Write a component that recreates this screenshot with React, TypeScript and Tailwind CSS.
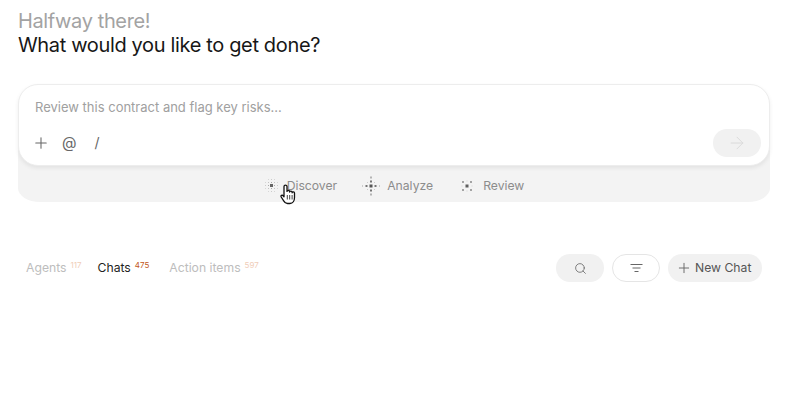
import React from "react";
import { Plus, Search, ArrowRight } from "lucide-react";

type Dot = [number, number, number, number];

function Dots({ dots, size }: { dots: Dot[]; size: number }) {
  return (
    <svg width={size} height={size} viewBox={`0 0 ${size} ${size}`} className="shrink-0">
      {dots.map(([x, y, s, o], i) => (
        <rect key={i} x={x - s / 2} y={y - s / 2} width={s} height={s} fill="#555" opacity={o} />
      ))}
    </svg>
  );
}

const discover: Dot[] = [
  [7.5, 7.5, 3, 0.9],
  [4.5, 7.5, 1, 0.45], [10.5, 7.5, 1, 0.45], [7.5, 4.5, 1, 0.45], [7.5, 10.5, 1, 0.45],
  [4.5, 4.5, 1, 0.3], [10.5, 4.5, 1, 0.3], [4.5, 10.5, 1, 0.3], [10.5, 10.5, 1, 0.3],
  [1.5, 7.5, 1, 0.25], [13.5, 7.5, 1, 0.25], [7.5, 1.5, 1, 0.25], [7.5, 13.5, 1, 0.25],
  [1.5, 4.5, 1, 0.18], [13.5, 4.5, 1, 0.18], [1.5, 10.5, 1, 0.18], [13.5, 10.5, 1, 0.18],
  [4.5, 1.5, 1, 0.18], [10.5, 1.5, 1, 0.18], [4.5, 13.5, 1, 0.18], [10.5, 13.5, 1, 0.18],
];
const analyze: Dot[] = [
  [10, 10, 3, 1],
  [5.5, 10, 2, 0.8], [14.5, 10, 2, 0.8], [10, 5.5, 2, 0.8], [10, 14.5, 2, 0.8],
  [1.5, 10, 1, 0.5], [18.5, 10, 1, 0.5], [10, 1.5, 2, 0.4], [10, 18.5, 2, 0.4],
  [6.5, 6.5, 1, 0.25], [13.5, 6.5, 1, 0.25], [6.5, 13.5, 1, 0.25], [13.5, 13.5, 1, 0.25],
];
const review: Dot[] = [
  [8, 8, 3, 0.95],
  [4, 4, 2, 0.5], [12, 4, 2, 0.5], [4, 12, 2, 0.5], [12, 12, 2, 0.5],
  [8, 3, 1, 0.2], [8, 13, 1, 0.2], [3, 8, 1, 0.2], [13, 8, 1, 0.2],
];

function HandCursor() {
  return (
    <svg width="16" height="21" viewBox="0 0 16 21" className="absolute left-[280px] top-[184px]">
      <path
        d="M4 2.4c0-1.800 3-1.800 3 0v5c0-1.300 2.600-1.300 2.600 0v.7c0-1.300 2.500-1.300 2.500 0v.7c0-1.200 2.400-1.100 2.400.3v4.400c0 3-1.600 6-4.600 6H7.500c-2 0-3-1.100-3.800-2.600L1.200 13c-.7-1.400 1-2.400 2-1.200L4 12.800z"
        fill="#fff"
        stroke="#111"
        strokeWidth="1.300"
        strokeLinejoin="round"
      />
      <path d="M7.300 11v4.500M9.700 11v4.500M12.100 11v4.500" stroke="#111" strokeWidth="0.8" fill="none" />
    </svg>
  );
}

function ModeItem({ dots, size, label, gap }: { dots: Dot[]; size: number; label: string; gap: string }) {
  return (
    <div className={`flex items-center ${gap}`}>
      <Dots dots={dots} size={size} />
      <span className="text-[12.2px] leading-4 text-[#8c8c8c]">{label}</span>
    </div>
  );
}

function Tab({ label, count, active, className }: { label: string; count: number; active?: boolean; className?: string }) {
  return (
    <div className={`flex items-start gap-1 ${className ?? ""}`}>
      <span className={`text-[12.2px] leading-4 ${active ? "text-[#222]" : "text-[#bdbdbd]"}`}>{label}</span>
      <span className={`text-[8px] leading-[10px] ${active ? "text-[#c2571a]" : "text-[#f0cdb8]"}`}>{count}</span>
    </div>
  );
}

export default function App() {
  return (
    <div
      className="relative h-[416px] w-[790px] overflow-hidden bg-white pl-[18px] pr-5 pt-[9px]"
      style={{ fontFamily: "Inter, 'Noto Sans', sans-serif" }}
    >
      <h1 className="text-[20px] font-normal leading-6 tracking-[-0.38px] text-[#a3a3a3]">Halfway there!</h1>
      <h2 className="text-[20px] font-normal leading-6 tracking-[-0.35px] text-[#171717]">What would you like to get done?</h2>

      <div className="relative z-10 mt-[27px] flex h-[82px] flex-col justify-between rounded-[20px] border border-[#ededed] bg-white pb-[8px] pl-4 pr-2 pt-[13px] shadow-[0_2px_4px_rgba(0,0,0,0.07)]">
        <p className="text-[13px] leading-[18px] text-[#a0a0a0]">Review this contract and flag key risks...</p>
        <div className="flex items-center justify-between">
          <div className="flex items-center text-[#666]">
            <Plus size={18} strokeWidth={1.4} className="-ml-[3px]" />
            <span className="ml-[12px] text-[15px] leading-5">@</span>
            <span className="ml-[18px] text-[14px] leading-5">/</span>
          </div>
          <div className="flex h-7 w-12 items-center justify-center rounded-full bg-[#f1f1f1]">
            <ArrowRight size={20} strokeWidth={1.1} className="text-[#d9d9d9]" />
          </div>
        </div>
      </div>

      <div className="-mt-5 flex h-[56px] items-end justify-center rounded-bl-[22px_14px] rounded-br-[22px_14px] bg-[#f3f3f3] pb-[6px]">
        <div className="flex items-center">
          <ModeItem dots={discover} size={16} label="Discover" gap="gap-[7px]" />
          <div className="ml-6">
            <ModeItem dots={analyze} size={20} label="Analyze" gap="gap-[6px]" />
          </div>
          <div className="ml-[26px]">
            <ModeItem dots={review} size={16} label="Review" gap="gap-2" />
          </div>
        </div>
      </div>

      <div className="mt-[52px] flex items-center justify-between pl-2 pr-2">
        <div className="flex items-center">
          <Tab label="Agents" count={117} />
          <Tab label="Chats" count={475} active className="ml-4" />
          <Tab label="Action items" count={597} className="ml-5" />
        </div>
        <div className="flex items-center gap-2">
          <div className="flex h-7 w-12 items-center justify-center rounded-full bg-[#f1f1f1]">
            <Search size={13} strokeWidth={1.5} className="text-[#666]" />
          </div>
          <div className="flex h-7 w-12 items-center justify-center rounded-full border border-[#e5e5e5] bg-white">
            <svg width="13" height="8" viewBox="0 0 13 8" fill="none" stroke="#666" strokeWidth="1">
              <path d="M0.500 0.500h12M2.500 4h8M4.500 7.500h4" />
            </svg>
          </div>
          <div className="flex h-7 w-[94px] items-center gap-[3px] rounded-full bg-[#f1f1f1] pl-[8px]">
            <Plus size={16} strokeWidth={1.4} className="text-[#666]" />
            <span className="text-[12.2px] leading-4 text-[#555]">New Chat</span>
          </div>
        </div>
      </div>

      <HandCursor />
    </div>
  );
}
